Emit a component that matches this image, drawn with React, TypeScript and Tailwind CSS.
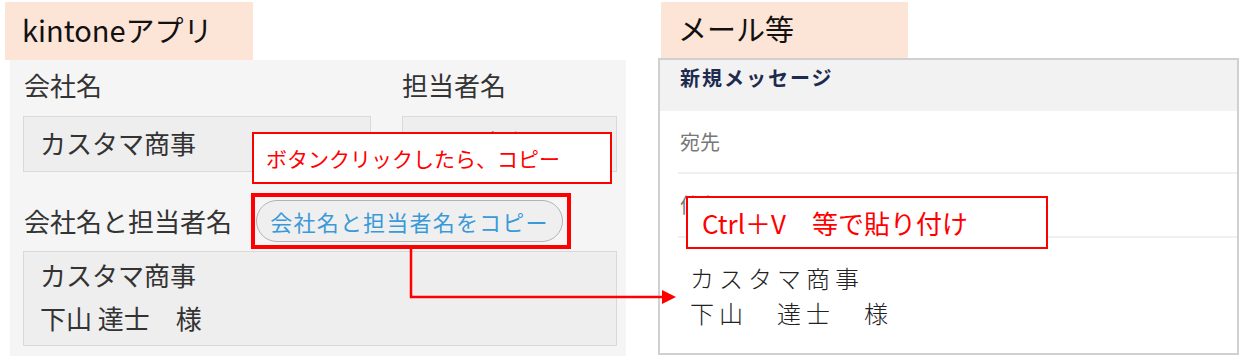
const jp = { fontFamily: '"Noto Sans CJK JP", "Noto Sans", sans-serif' };

function Input({ className, children }: { className: string; children: React.ReactNode }) {
  return (
    <div className={`border border-[#d9d9d9] bg-[#eeeeee] pl-[16px] text-[26px] text-[#333] ${className}`}>
      {children}
    </div>
  );
}

function KintonePanel() {
  return (
    <div className="w-[626px] shrink-0 pl-[5px]">
      <div className="h-[58px] w-[248px] bg-[#fce4d6] pl-[17px] pt-[5px] text-[29px] leading-[44px] text-[#111]">
        kintoneアプリ
      </div>
      <div className="ml-[5px] h-[298px] w-[616px] bg-[#f5f5f5] pl-[13px]">
        <div className="flex gap-[31px]">
          <div className="w-[348px]">
            <div className="pt-[12px] pl-[1px] text-[26px] leading-[26px] text-[#333]">会社名</div>
            <Input className="mt-[18px] h-[56px] leading-[52px]">カスタマ商事</Input>
          </div>
          <div className="w-[215px]">
            <div className="pt-[12px] text-[26px] leading-[26px] text-[#333]">担当者名</div>
            <Input className="mt-[18px] h-[56px] leading-[52px]">下山 達士</Input>
          </div>
        </div>
        <div className="mt-[28px] flex h-[42px] items-center">
          <div className="w-[233px] pl-[1px] text-[26px] leading-[30px] text-[#333]">会社名と担当者名</div>
          <button className="h-[42px] w-[307px] rounded-full border border-[#b3b3b3] bg-[#efefef] text-[22px] tracking-[1.2px] text-[#3a9ad9]" style={jp}>
            会社名と担当者名をコピー
          </button>
        </div>
        <Input className="mt-[9px] h-[95px] w-[594px] pt-[1px] leading-[43px]">
          <div>カスタマ商事</div>
          <div>下山 達士　様</div>
        </Input>
      </div>
    </div>
  );
}

function MailPanel() {
  return (
    <div className="ml-[32px] w-[581px] shrink-0">
      <div className="ml-[3px] h-[56px] w-[247px] bg-[#fce4d6] pl-[17px] pt-[4px] text-[29px] leading-[44px] text-[#111]">
        メール等
      </div>
      <div className="h-[297px] border-2 border-[#d0d0d0] bg-white">
        <div className="h-[51px] bg-[#f2f2f2] pl-[20px] pt-[6px] text-[20px] font-bold leading-[24px] tracking-[2px] text-[#1d2b4f]">
          新規メッセージ
        </div>
        <div className="ml-[18px] flex h-[63px] items-center border-b-2 border-[#eef0f1] pl-[2px] text-[20px] text-[#777]">
          宛先
        </div>
        <div className="ml-[18px] flex h-[64px] items-center border-b-2 border-[#eef0f1] pl-[2px] text-[20px] text-[#777]">
          件名
        </div>
        <div className="pl-[30px] pt-[22px] text-[24px] font-light leading-[35px] tracking-[5px] text-[#222]">
          <div>カスタマ商事</div>
          <div>下山　達士　様</div>
        </div>
      </div>
    </div>
  );
}

export default function App() {
  return (
    <div className="relative flex h-[356px] w-[1239px] overflow-hidden bg-white pt-[2px]" style={jp}>
      <KintonePanel />
      <MailPanel />

      {/* annotations */}
      <div className="absolute left-[252px] top-[132px] h-[52px] w-[360px] border-2 border-[#ff0000] bg-white pl-[12px] text-[21px] leading-[48px] text-[#ff0000]">
        ボタンクリックしたら、コピー
      </div>
      <div className="absolute left-[251px] top-[193px] h-[56px] w-[320px] border-4 border-[#ff0000]" />
      <div className="absolute left-[686px] top-[196px] h-[53px] w-[362px] border-2 border-[#ff0000] bg-white pl-[14px] text-[26px] leading-[49px] text-[#ff0000]">
        Ctrl＋V　等で貼り付け
      </div>
      <svg className="absolute left-0 top-0" width="1239" height="356">
        <polyline points="411,249 411,297 664,297" fill="none" stroke="#ff0000" strokeWidth="2.5" />
        <polygon points="662,290 676,297 662,304" fill="#ff0000" />
      </svg>
    </div>
  );
}
